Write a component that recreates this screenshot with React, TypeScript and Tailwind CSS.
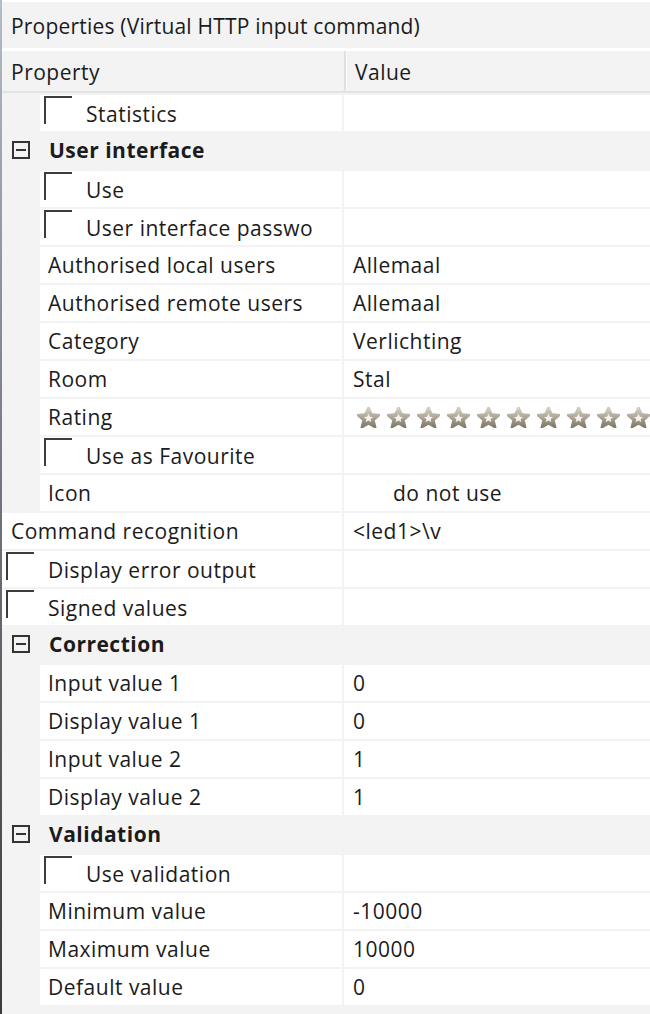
import React from 'react'

type Row =
  | { kind: 'cat'; label: string }
  | { kind: 'check'; label: string; top?: boolean }
  | { kind: 'text'; label: string; value?: string; top?: boolean }
  | { kind: 'rating'; label: string }
  | { kind: 'icon'; label: string; value: string }

const rows: Row[] = [
  { kind: 'check', label: 'Statistics' },
  { kind: 'cat', label: 'User interface' },
  { kind: 'check', label: 'Use' },
  { kind: 'check', label: 'User interface passwo' },
  { kind: 'text', label: 'Authorised local users', value: 'Allemaal' },
  { kind: 'text', label: 'Authorised remote users', value: 'Allemaal' },
  { kind: 'text', label: 'Category', value: 'Verlichting' },
  { kind: 'text', label: 'Room', value: 'Stal' },
  { kind: 'rating', label: 'Rating' },
  { kind: 'check', label: 'Use as Favourite' },
  { kind: 'icon', label: 'Icon', value: 'do not use' },
  { kind: 'text', label: 'Command recognition', value: '<led1>\\v', top: true },
  { kind: 'check', label: 'Display error output', top: true },
  { kind: 'check', label: 'Signed values', top: true },
  { kind: 'cat', label: 'Correction' },
  { kind: 'text', label: 'Input value 1', value: '0' },
  { kind: 'text', label: 'Display value 1', value: '0' },
  { kind: 'text', label: 'Input value 2', value: '1' },
  { kind: 'text', label: 'Display value 2', value: '1' },
  { kind: 'cat', label: 'Validation' },
  { kind: 'check', label: 'Use validation' },
  { kind: 'text', label: 'Minimum value', value: '-10000' },
  { kind: 'text', label: 'Maximum value', value: '10000' },
  { kind: 'text', label: 'Default value', value: '0' },
]

// sunken checkbox: only the top and left edges are dark
function Checkbox() {
  return <div className="w-[28px] h-[28px] shrink-0 self-start mt-[1px] border-t-2 border-l-2 border-[#3c3c3c] bg-white" />
}

function Star() {
  return (
    <svg width="23" height="21" viewBox="0 0 22 20" className="shrink-0">
      <defs>
        <linearGradient id="sg" x1="0" y1="0" x2="0" y2="1">
          <stop offset="0" stopColor="#d2ccbe" />
          <stop offset="1" stopColor="#857d6d" />
        </linearGradient>
      </defs>
      <polygon
        points="11,2 13.6,7.6 19.6,8.2 15,12.2 16.4,18 11,15 5.6,18 7,12.2 2.4,8.2 8.4,7.6"
        fill="#f4f2ee"
        stroke="url(#sg)"
        strokeWidth="3.6"
        strokeLinejoin="miter"
      />
    </svg>
  )
}

function MinusBox() {
  return (
    <div className="w-[18px] h-[18px] border-2 border-[#333] flex items-center justify-center">
      <div className="w-[10px] h-[2px] bg-[#333]" />
    </div>
  )
}

function DataRow({ row }: { row: Row }) {
  if (row.kind === 'cat') {
    return (
      <div className="h-[38px] flex items-center bg-[#f3f3f3]">
        <div className="w-[47px] pl-[10px] flex items-center">
          <MinusBox />
        </div>
        <span className="font-bold pt-[1px]">{row.label}</span>
      </div>
    )
  }
  const top = 'top' in row && row.top
  return (
    <div className="h-[38px] pt-[2px] flex bg-[#f3f3f3]">
      {!top && <div className="w-[38px] shrink-0" />}
      <div className={`${top ? 'w-[340px]' : 'w-[302px]'} shrink-0 h-[36px] bg-white flex items-center overflow-hidden whitespace-nowrap`}>
        {row.kind === 'check' ? (
          <div className="flex items-start pl-[4px] h-full">
            <Checkbox />
            <span className="ml-[14px] leading-[36px] pt-[1px]">{row.label}</span>
          </div>
        ) : (
          <span className={top ? 'pl-[9px] pt-[1px]' : 'pl-[8px] pt-[1px]'}>{row.label}</span>
        )}
      </div>
      <div className="w-[2px] shrink-0" />
      <div className="flex-1 h-[36px] bg-white flex items-center overflow-hidden whitespace-nowrap">
        {row.kind === 'text' && <span className="pl-[9px] pt-[1px]">{row.value}</span>}
        {row.kind === 'icon' && <span className="pl-[49px] pt-[1px]">{row.value}</span>}
        {row.kind === 'rating' && (
          <div className="flex gap-[7px] pl-[13px]">
            {Array.from({ length: 11 }).map((_, i) => (
              <Star key={i} />
            ))}
          </div>
        )}
      </div>
    </div>
  )
}

export default function App() {
  return (
    <div
      className="w-[650px] h-[1014px] overflow-hidden flex bg-white text-[21px] tracking-[0.5px] text-[#1b1b1b]"
      style={{ fontFamily: '"Open Sans", "Noto Sans", sans-serif' }}
    >
      <div className="w-[2px] shrink-0 bg-gradient-to-b from-[#b4bcc6] via-[#6f747c] to-[#3b3b3b]" />
      <div className="flex-1 flex flex-col">
        <div className="h-[2px] bg-white" />
        <div className="h-[46px] bg-[#f3f3f3] flex items-center pl-[9px] pt-[4px] whitespace-nowrap tracking-[0.2px]">
          Properties (Virtual HTTP input command)
        </div>
        <div className="h-[3px] bg-white" />
        <div className="h-[42px] flex bg-[#f3f3f3] border-b-2 border-[#e3e3e3]">
          <div className="w-[342px] flex items-center pl-[9px] pt-[3px]">Property</div>
          <div className="w-[2px] bg-[#e0e0e0]" />
          <div className="w-[1px] bg-white" />
          <div className="flex-1 flex items-center pl-[8px] pt-[3px]">Value</div>
        </div>
        <div className="flex flex-col pr-[2px] bg-[#f3f3f3] flex-1">
          {rows.map((r, i) => (
            <DataRow key={i} row={r} />
          ))}
        </div>
      </div>
    </div>
  )
}
